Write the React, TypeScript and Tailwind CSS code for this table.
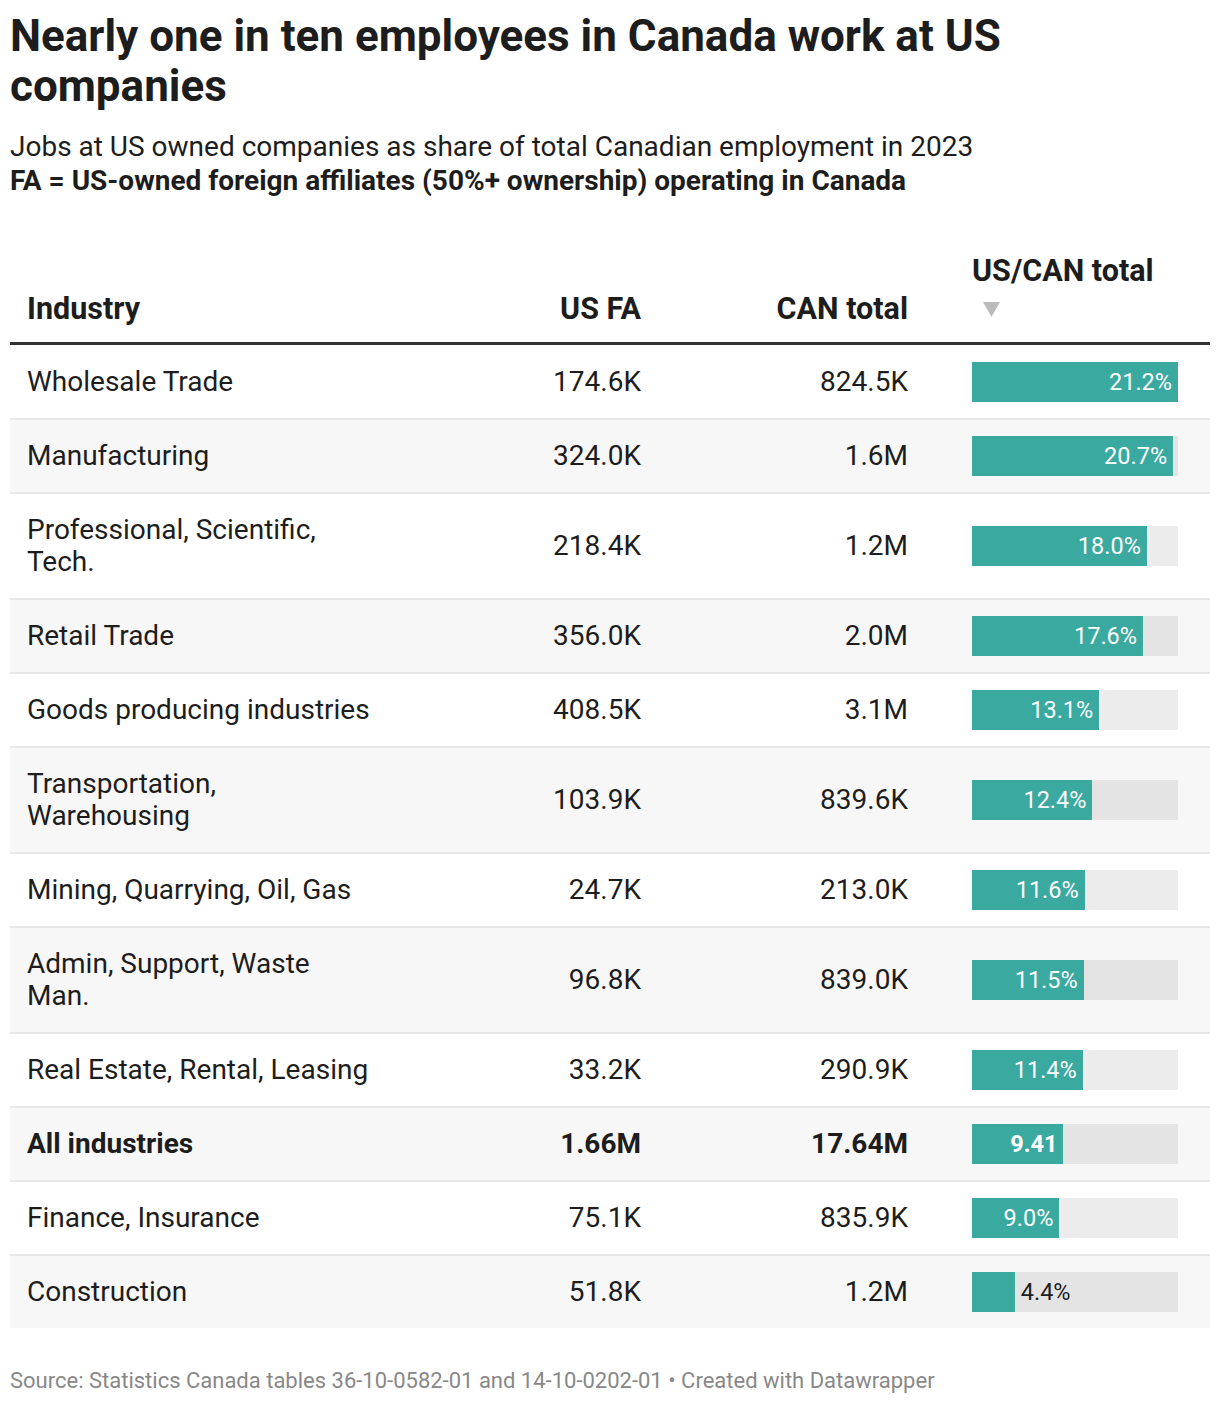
import React from "react";

type Row = { name: string; us: string; can: string; v: number; label: string; bold?: boolean };

const rows: Row[] = [
  { name: "Wholesale Trade", us: "174.6K", can: "824.5K", v: 21.2, label: "21.2%" },
  { name: "Manufacturing", us: "324.0K", can: "1.6M", v: 20.7, label: "20.7%" },
  { name: "Professional, Scientific, Tech.", us: "218.4K", can: "1.2M", v: 18.0, label: "18.0%" },
  { name: "Retail Trade", us: "356.0K", can: "2.0M", v: 17.6, label: "17.6%" },
  { name: "Goods producing industries", us: "408.5K", can: "3.1M", v: 13.1, label: "13.1%" },
  { name: "Transportation, Warehousing", us: "103.9K", can: "839.6K", v: 12.4, label: "12.4%" },
  { name: "Mining, Quarrying, Oil, Gas", us: "24.7K", can: "213.0K", v: 11.6, label: "11.6%" },
  { name: "Admin, Support, Waste Man.", us: "96.8K", can: "839.0K", v: 11.5, label: "11.5%" },
  { name: "Real Estate, Rental, Leasing", us: "33.2K", can: "290.9K", v: 11.4, label: "11.4%" },
  { name: "All industries", us: "1.66M", can: "17.64M", v: 9.41, label: "9.41", bold: true },
  { name: "Finance, Insurance", us: "75.1K", can: "835.9K", v: 9.0, label: "9.0%" },
  { name: "Construction", us: "51.8K", can: "1.2M", v: 4.4, label: "4.4%" },
];

const MAX = 21.2;
const BAR_W = 206;

export default function App() {
  return (
    <div
      className="bg-white px-[10px] pt-[11px] pb-[10px] text-[#1d1d1d]"
      style={{ fontFamily: "Roboto, 'Liberation Sans', sans-serif" }}
    >
      <h1 className="text-[44px] leading-[50px] font-bold text-[#1d1d1d]">
        Nearly one in ten employees in Canada work at US companies
      </h1>
      <div className="mt-[19px] text-[28px] leading-[34px] text-[#1d1d1d]">
        <div>Jobs at US owned companies as share of total Canadian employment in 2023</div>
        <div className="font-bold">FA = US-owned foreign affiliates (50%+ ownership) operating in Canada</div>
      </div>

      <div className="mt-[54px] w-[1200px]">
        {/* header */}
        <div className="flex items-end border-b-[3px] border-[#333333] pb-[14px] text-[30.5px] leading-[38px] font-bold">
          <div className="w-[362px] pl-[17px]">Industry</div>
          <div className="w-[285px] pr-[16px] text-right">US FA</div>
          <div className="w-[267px] pr-[16px] text-right">CAN total</div>
          <div className="w-[286px] pl-[48px] flex flex-col">
            <div className="h-[38px] whitespace-nowrap">US/CAN total</div>
            <div className="h-[38px] flex items-center pl-[11px]">
              <svg width="17" height="15" viewBox="0 0 17 15">
                <polygon points="0,0 17,0 8.5,15" fill="#bbbbbb" />
              </svg>
            </div>
          </div>
        </div>

        {rows.map((r, i) => {
          const w = (r.v / MAX) * BAR_W;
          const inside = w > 70;
          return (
            <div
              key={r.name}
              className={`flex items-center text-[28px] leading-[32px] ${
                i === 0 ? "border-t border-transparent" : "border-t-2 border-[#e8e8e8]"
              } ${i % 2 === 1 ? "bg-[#f7f7f7]" : "bg-white"} ${r.bold ? "font-bold" : ""}`}
            >
              <div className="w-[362px] pl-[17px] py-[20px]">
                <div className="max-w-[346px]">{r.name}</div>
              </div>
              <div className="w-[285px] pr-[16px] py-[20px] text-right">{r.us}</div>
              <div className="w-[267px] pr-[16px] py-[20px] text-right">{r.can}</div>
              <div className="w-[286px] pl-[48px]">
                <div className="h-[40px] w-[206px] bg-black/[0.075] flex">
                  <div
                    className="h-full bg-[#3aa99f] flex items-center justify-end pr-[6px] text-white text-[23.5px]"
                    style={{ width: `${w}px` }}
                  >
                    {inside ? r.label : ""}
                  </div>
                  {!inside && (
                    <div className="h-full flex items-center pl-[6px] text-[23.5px] text-[#1d1d1d]">{r.label}</div>
                  )}
                </div>
              </div>
            </div>
          );
        })}
      </div>

      <div className="mt-[39px] text-[22px] leading-[28px] text-[#888888]">
        Source: Statistics Canada tables 36-10-0582-01 and 14-10-0202-01 • Created with Datawrapper
      </div>
    </div>
  );
}
